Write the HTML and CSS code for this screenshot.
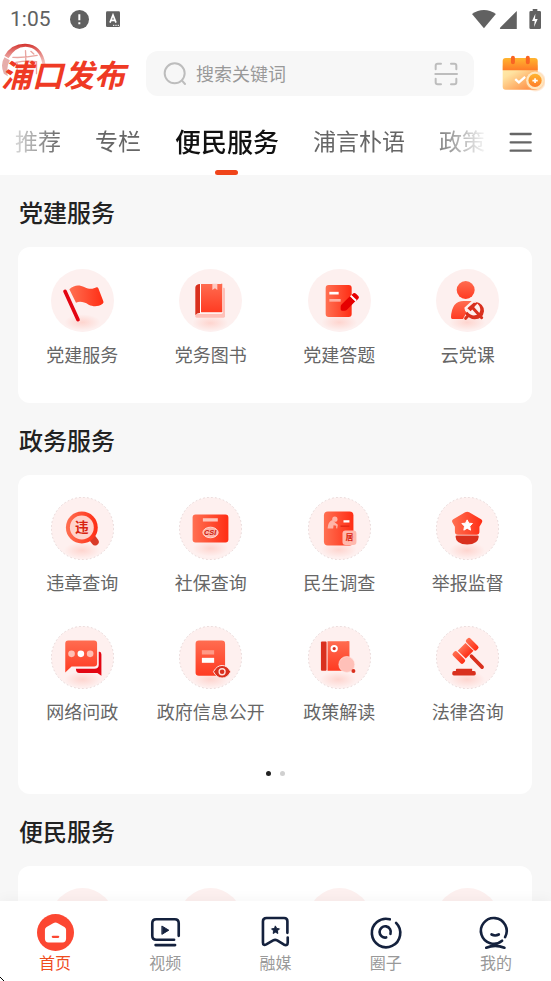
FILE: index.html
```html
<!DOCTYPE html>
<html lang="zh-CN">
<head>
<meta charset="utf-8">
<meta name="viewport" content="width=device-width, initial-scale=1">
<title>浦口发布</title>
<link rel="stylesheet" href="styles.css">
</head>
<body>
<div class="app">
  <div class="status">
    <span class="clock">1:05</span>
    <svg class="status-alert" viewBox="209 27 57 57"><circle cx="237.500" cy="55.500" r="28.500" fill="#616161"/><path d="M237 40v18M237 64v6" stroke="#fff" stroke-width="6"/></svg>
    <svg class="status-lang" viewBox="318 30 42 48"><rect x="318" y="31" width="42" height="47" rx="4" fill="#616161"/><path d="M330 65l9-23 9 23M333 58h12" fill="none" stroke="#fff" stroke-width="5"/><path d="M339 73h4m3 0h4m3 0h4" stroke="#fff" stroke-width="3"/></svg>
    <svg class="status-signals" viewBox="588 24 208 60" fill="#616161"><path d="M588 39Q605 27 624 27Q643 27 660 39L624 82Z"/><path d="M723 30V84H674Q670 84 674 79Z"/><path d="M771 24h14v6h7q4 0 4 4v46q0 4-4 4h-27q-4 0-4-4V34q0-4 4-4h6z"/><path d="M779 38l-10 22h8l-2 18 11-24h-8z" fill="#fff"/></svg>
  </div>

  <header class="header">
    <h1 class="logo">
      <svg class="logo-seal" viewBox="4 126 134 108" fill="none">
        <defs><linearGradient id="seal" x1="0" y1="0" x2="0" y2="1"><stop offset="0" stop-color="#d3302b"/><stop offset="1" stop-color="#e8938d" stop-opacity=".5"/></linearGradient></defs>
        <path d="M12 218Q0 190 14 169L30 178Q18 200 24 226Z" fill="#dc8a86" opacity=".7"/>
        <path d="M14 164Q35 127 77 128Q127 130 137 190H128Q119 139 77 137Q45 138 26 172Z" fill="url(#seal)"/>
        <path d="M39 169Q75 171 112 163M77 149Q80 190 74 222M93 151l9 8M48 184Q80 178 110 182V218M52 184v32M56 200h48" stroke="#e9a5a0" stroke-width="4" stroke-linecap="round"/>
      </svg>
      <span class="logo-text">浦口发布</span>
    </h1>
    <form class="search" role="search">
      <svg class="search-icon" viewBox="488 184 72 72" fill="none" stroke="#bdbdbd" stroke-width="6" stroke-linecap="round"><circle cx="523" cy="218" r="30"/><path d="M545 240l9 10"/></svg>
      <input class="search-input" type="text" placeholder="搜索关键词" aria-label="搜索关键词">
      <button class="plain" type="button" aria-label="扫一扫"><svg class="scan-icon" viewBox="476 186 72 72" fill="none" stroke="#bdbdbd" stroke-width="6" stroke-linecap="round" stroke-linejoin="round"><path d="M481 208v-11q0-6 6-6h10M527 191h10q6 0 6 6v11M543 236v11q0 6-6 6h-10M497 253h-10q-6 0-6-6v-11M480 222h65"/></svg></button>
    </form>
    <button class="plain" type="button" aria-label="签到">
      <svg class="calendar" viewBox="678 168 130 112">
        <defs>
          <linearGradient id="calTop" x1="0" y1="0" x2="0" y2="1"><stop offset="0" stop-color="#ffb52f"/><stop offset="1" stop-color="#ff7c28"/></linearGradient>
          <linearGradient id="calBody" x1="0" y1="0" x2=".8" y2="1"><stop offset="0" stop-color="#ffefb0"/><stop offset=".35" stop-color="#ffe2a0"/><stop offset="1" stop-color="#ff8d42"/></linearGradient>
          <radialGradient id="coinGlow"><stop offset=".6" stop-color="#ffb26b"/><stop offset="1" stop-color="#ffb26b" stop-opacity="0"/></radialGradient>
        </defs>
        <rect x="680" y="194" width="106" height="79" rx="9" fill="url(#calBody)"/>
        <path d="M680 214v-28q0-9 9-9h88q9 0 9 9v28z" fill="url(#calTop)"/>
        <path d="M711 176v14M756 176v14" stroke="#f96423" stroke-width="12" stroke-linecap="round"/>
        <path d="M718 241l11 10 19-17" fill="none" stroke="#fff" stroke-width="7"/>
        <circle cx="779" cy="247" r="33" fill="url(#coinGlow)"/><circle cx="778" cy="245" r="27" fill="#ffe6bd"/><circle cx="778" cy="245" r="20" fill="url(#calTop)"/>
        <path d="M778 238v15M770 245.500h16" stroke="#fff" stroke-width="5"/>
      </svg>
    </button>
  </header>

  <div class="tabbar">
    <nav class="tabs" aria-label="频道">
      <a class="tab" href="#">推荐</a>
      <a class="tab" href="#">专栏</a>
      <a class="tab tab-active" href="#" aria-current="page">便民服务</a>
      <a class="tab" href="#">浦言朴语</a>
      <a class="tab" href="#">政策</a>
    </nav>
    <button class="plain menu" type="button" aria-label="全部频道"><svg class="menu-icon" viewBox="699 67 69 60" stroke="#666" stroke-width="7" stroke-linecap="round"><path d="M704 73h60M704 98h60M704 123h60"/></svg></button>
  </div>

  <main class="content">
    <section>
      <h2 class="title">党建服务</h2>
      <div class="card card-single">
        <div class="grid">
          <a class="item" href="#">
            <svg class="badge" viewBox="94 42 189 189">
              <defs>
                <linearGradient id="red"><stop offset="0" stop-color="#ff7052"/><stop offset="1" stop-color="#ff2d14"/></linearGradient>
                <linearGradient id="redV" x1="0" y1="0" x2="0" y2="1"><stop offset="0" stop-color="#ff6c50"/><stop offset="1" stop-color="#ff3b22"/></linearGradient>
                <radialGradient id="glow"><stop offset="0" stop-color="#ffb9ae" stop-opacity=".5"/><stop offset="1" stop-color="#ffb9ae" stop-opacity="0"/></radialGradient>
              </defs>
              <circle cx="188.500" cy="136.500" r="94.500" fill="#fdf0ef"/><ellipse cx="188" cy="202" rx="54" ry="24" fill="url(#glow)"/>
              <path d="M136 109l39 85" stroke="#e30613" stroke-width="11" stroke-linecap="round"/>
              <path d="M149 103C165 89 178 89 195 97C210 104 221 102 231 97Q234 96 236 100L251 139Q253 143 249 146C234 156 221 155 207 149C193 141 181 138 169 143Z" fill="url(#red)"/>
            </svg>
            <span class="label">党建服务</span>
          </a>
          <a class="item" href="#">
            <svg class="badge" viewBox="480 42 189 189">
              <circle cx="574.500" cy="136.500" r="94.500" fill="#fdf0ef"/><ellipse cx="574" cy="204" rx="54" ry="24" fill="url(#glow)"/>
              <rect x="529" y="98" width="89" height="90" rx="4" fill="#ffc0b8"/><rect x="530" y="88" width="82" height="88" rx="5" fill="#fff"/>
              <path d="M543 87v87q-8-1-14 6V97q1-9 14-10z" fill="#d9301e"/><path d="M546 87h60q4-4 4 2v83h-64z" fill="url(#redV)"/><path d="M580 86h15v19l-7-5-8 5z" fill="#ffc9c1"/>
            </svg>
            <span class="label">党务图书</span>
          </a>
          <a class="item" href="#">
            <svg class="badge" viewBox="97 42 189 189">
              <circle cx="191.500" cy="136.500" r="94.500" fill="#fdf0ef"/><ellipse cx="191" cy="202" rx="54" ry="24" fill="url(#glow)"/>
              <rect x="150" y="90" width="78" height="96" rx="9" fill="url(#red)"/>
              <path d="M161 114.500h28" stroke="#fff" stroke-width="8"/><path d="M161 136h34" stroke="#ffb0a2" stroke-width="8"/>
              <path d="M199 147l24-23 16 15-25 25q-3 3-8 3h-7q-4 0-4-4v-8q0-4 4-8zM227 121l6-6q4-3 8 1l7 7q4 4 0 8l-6 6z" fill="#e60000"/><path d="M223 124l16 15 4-4-16-15z" fill="#fff"/>
            </svg>
            <span class="label">党建答题</span>
          </a>
          <a class="item" href="#">
            <svg class="badge" viewBox="483 42 189 189">
              <circle cx="577.500" cy="136.500" r="94.500" fill="#fdf0ef"/><ellipse cx="577" cy="202" rx="54" ry="24" fill="url(#glow)"/>
              <circle cx="572" cy="105" r="27" fill="url(#redV)"/><path d="M528 187Q530 138 566 138H590L568 158Q569 168 575 172L564 192H532Q528 192 528 187Z" fill="url(#redV)"/>
              <path d="M601 140Q628 146 627 169Q624 193 599 193Q583 192 570 176L577 170Q588 183 600 181Q614 179 616 165Q616 151 601 140Z" fill="#d9301e"/><path d="M579 182l-7 8" stroke="#d9301e" stroke-width="9" stroke-linecap="round"/><path d="M591 156l29 32" stroke="#d9301e" stroke-width="9" stroke-linecap="round"/><path d="M577 160l19-17 13 1-8 8-14 17z" fill="#d9301e"/>
            </svg>
            <span class="label">云党课</span>
          </a>
        </div>
      </div>
    </section>

    <section>
      <h2 class="title">政务服务</h2>
      <div class="card">
        <div class="grid">
          <a class="item" href="#">
            <svg class="badge" viewBox="93 37 190 190">
              <circle class="disc" cx="188" cy="132" r="94"/><ellipse cx="186" cy="198" rx="54" ry="24" fill="url(#glow)"/>
              <path d="M215 158l11 14" stroke="#d93a28" stroke-width="22" stroke-linecap="round"/><circle cx="186" cy="129" r="48" fill="url(#red)"/><circle cx="186" cy="129" r="36" fill="#ffd3cb"/>
              <text class="glyph" x="186" y="144" font-size="41">违</text>
            </svg>
            <span class="label">违章查询</span>
          </a>
          <a class="item" href="#">
            <svg class="badge" viewBox="479 37 190 190">
              <circle class="disc" cx="574" cy="132" r="94"/><ellipse cx="574" cy="192" rx="54" ry="24" fill="url(#glow)"/>
              <rect x="520" y="90" width="108" height="84" rx="9" fill="url(#red)"/><rect x="551" y="101" width="45" height="10" fill="#ffc6bc"/>
              <ellipse cx="574" cy="144" rx="23" ry="16" fill="#ffb3a6" stroke="#ffd6cf" stroke-width="3"/><text class="glyph glyph-latin" x="573" y="152" font-size="22">CSI</text>
            </svg>
            <span class="label">社保查询</span>
          </a>
          <a class="item" href="#">
            <svg class="badge" viewBox="97 37 190 190">
              <circle class="disc" cx="192" cy="132" r="94"/><ellipse cx="190" cy="196" rx="54" ry="24" fill="url(#glow)"/>
              <rect x="145" y="81" width="89" height="102" rx="12" fill="url(#red)"/>
              <circle cx="178" cy="104" r="8" fill="#ffb5a8"/><path d="M156 132Q157 111 170 106L182 117 187 121 185 132 182 131V124L174 122 173 132Z" fill="#ffb5a8"/>
              <path d="M204 110.500h18" stroke="#fff" stroke-width="7"/><path d="M195 125h27" stroke="#e02613" stroke-width="4"/>
              <rect x="201" y="138" width="42" height="44" rx="9" fill="#ffb9ad"/><text class="glyph" x="222" y="168" font-size="24">居</text>
            </svg>
            <span class="label">民生调查</span>
          </a>
          <a class="item" href="#">
            <svg class="badge" viewBox="483 37 190 190">
              <circle class="disc" cx="578" cy="132" r="94"/><ellipse cx="577" cy="198" rx="54" ry="24" fill="url(#glow)"/>
              <path d="M571 83Q577 80 583 83L619 104Q625 108 621 115L614 127V142Q614 151 605 151H549Q540 151 540 142V127L533 115Q529 108 535 104Z" fill="url(#red)"/>
              <path d="M577 106l5 10 11 1-8 8 2 12-10-6-10 6 2-12-8-8 11-1z" fill="#fff" stroke="#fff" stroke-width="3" stroke-linejoin="round"/>
              <path d="M545 153H609Q612 153 612 157Q611 180 577 180Q543 180 542 157Q542 153 545 153Z" fill="#d9301e"/>
            </svg>
            <span class="label">举报监督</span>
          </a>
          <a class="item" href="#">
            <svg class="badge" viewBox="93 33 190 190">
              <circle class="disc" cx="188" cy="128" r="94"/><ellipse cx="188" cy="194" rx="54" ry="24" fill="url(#glow)"/>
              <path d="M237 111Q245 109 245 119V183L233 175H178Q169 175 168 162H224Q237 162 237 150Z" fill="#e30613"/>
              <path d="M145 77H223Q232 77 232 86V146Q232 155 223 155H155L136 173V86Q136 77 145 77Z" fill="url(#redV)"/>
              <circle cx="155" cy="117" r="10" fill="#ffc0b4"/><circle cx="183" cy="117" r="10" fill="#fff"/><circle cx="211" cy="117" r="10" fill="#ffc0b4"/>
            </svg>
            <span class="label">网络问政</span>
          </a>
          <a class="item" href="#">
            <svg class="badge" viewBox="479 33 190 190">
              <circle class="disc" cx="574" cy="128" r="94"/><ellipse cx="574" cy="194" rx="54" ry="24" fill="url(#glow)"/>
              <rect x="529" y="77" width="89" height="106" rx="10" fill="url(#redV)"/><path d="M548 112.500h37" stroke="#ff9a87" stroke-width="13"/><path d="M548 136.500h37" stroke="#fff" stroke-width="15"/>
              <path d="M583 171Q593 152 609 152Q625 152 635 171Q625 190 609 190Q593 190 583 171Z" fill="#d9301e" stroke="#ffe9e6" stroke-width="3"/><circle cx="609" cy="171" r="9" fill="none" stroke="#ffe0db" stroke-width="4"/>
            </svg>
            <span class="label">政府信息公开</span>
          </a>
          <a class="item" href="#">
            <svg class="badge" viewBox="97 33 190 190">
              <circle class="disc" cx="192" cy="128" r="94"/><ellipse cx="188" cy="194" rx="54" ry="24" fill="url(#glow)"/>
              <rect x="136" y="80" width="17" height="88" rx="3" fill="#d9301e"/><path d="M156 79h56q4-2 10 0v89h-66z" fill="url(#redV)"/>
              <circle cx="176" cy="101" r="8" fill="#d9301e" stroke="#fff" stroke-width="6"/>
              <circle cx="214" cy="149" r="24" fill="#ffc0b8" stroke="#ffe6e2" stroke-width="2"/><circle cx="234" cy="169" r="6" fill="#d9301e"/>
            </svg>
            <span class="label">政策解读</span>
          </a>
          <a class="item" href="#">
            <svg class="badge" viewBox="483 33 190 190">
              <circle class="disc" cx="578" cy="128" r="94"/><ellipse cx="577" cy="194" rx="54" ry="24" fill="url(#glow)"/>
              <path d="M590 124l32 33" stroke="#d9301e" stroke-width="11" stroke-linecap="round"/>
              <g transform="rotate(45 572 108)" fill="url(#red)"><rect x="555" y="91" width="34" height="33"/><rect x="550" y="71" width="44" height="17" rx="6"/><rect x="550" y="128" width="44" height="17" rx="6"/></g>
              <path d="M546 162h46v7h6q5 0 5 6v3q0 4-5 4h-61q-5 0-5-4v-3q0-6 5-6h6v-4q0-3 3-3z" fill="#d9301e"/>
            </svg>
            <span class="label">法律咨询</span>
          </a>
        </div>
        <div class="pager"><span class="dot dot-on"></span><span class="dot"></span></div>
      </div>
    </section>

    <section>
      <h2 class="title">便民服务</h2>
      <div class="card">
        <div class="grid">
          <span class="item"><span class="blank"></span></span>
          <span class="item"><span class="blank"></span></span>
          <span class="item"><span class="blank"></span></span>
          <span class="item"><span class="blank"></span></span>
        </div>
      </div>
    </section>
  </main>

  <nav class="bottom" aria-label="主导航">
    <a class="nav nav-on" href="#">
      <svg class="nav-icon" viewBox="108 162 112 112"><circle cx="164" cy="218" r="56" fill="#fc4732"/><path d="M157 190Q164 186 171 190L191 201Q196 204 196 210V237Q196 248 185 248H143Q132 248 132 237V210Q132 204 137 201Z" fill="#fff"/><path d="M156 231h16" stroke="#fc4732" stroke-width="7" stroke-linecap="round"/></svg>
      <span>首页</span>
    </a>
    <a class="nav" href="#">
      <svg class="nav-icon line" viewBox="439 162 112 112"><path d="M535 228V190Q535 178 523 178H467Q455 178 455 190V228Q455 240 467 240H521M465 256h59"/><path class="solid" d="M485 199L505 211 485 223Z"/></svg>
      <span>视频</span>
    </a>
    <a class="nav" href="#">
      <svg class="nav-icon line" viewBox="770 162 112 112"><path d="M862 219V184Q862 174 852 174H799Q788 174 788 184V248Q788 259 798 254L819 242Q825 239 831 242L852 255Q863 259 863 248V233"/><path class="solid" d="M826 199l4 7 8 1-6 6 1 8-7-4-7 4 1-8-6-6 8-1z"/></svg>
      <span>融媒</span>
    </a>
    <a class="nav" href="#">
      <svg class="nav-icon line" viewBox="272 462 112 112"><path d="M341 478A43 43 0 1 0 360 489M343 522A17 17 0 1 0 330 533"/></svg>
      <span>圈子</span>
    </a>
    <a class="nav" href="#">
      <svg class="nav-icon line" viewBox="603 462 112 112"><path d="M679 543A39 39 0 1 1 688 532M647 524Q658 530 669 524M631 564Q658 553 686 564"/></svg>
      <span>我的</span>
    </a>
    <svg class="corner" viewBox="0 0 4 4" aria-hidden="true"><path d="M0 0h1v1H0zM1 1h1v1H1zM2 2h1v1H2zM3 3h1v1H3z"/></svg>
  </nav>
</div>
</body>
</html>
```
FILE: styles.css
```css
* { box-sizing: border-box; }
body { margin: 0; background: #fff; color: #666; font-family: "Noto Sans CJK SC", sans-serif; }
a { color: inherit; text-decoration: none; }
svg { display: block; flex: none; }
h1, h2 { margin: 0; }

.app { display: flex; flex-direction: column; height: 100vh; overflow: hidden; }
.plain { padding: 0; border: 0; background: none; }

.status { display: flex; align-items: center; height: 38px; padding: 0 10px; }
.clock { font: 21px/20px Roboto, sans-serif; color: #616161; margin-right: 19px; }
.status-alert { width: 19px; height: 19px; margin-right: 17px; }
.status-lang { width: 14px; height: 16px; }
.status-signals { width: 69px; height: 20px; margin-left: auto; }

.header { display: flex; align-items: center; height: 71px; padding: 0 6px 0 1px; }
.logo { position: relative; width: 129px; height: 62px; margin-right: 16px; font-size: 31px; line-height: 40px; padding-top: 11px; white-space: nowrap; }
.logo-seal { position: absolute; left: 0; top: 0; width: 45px; height: 36px; }
.logo-text { position: relative; color: #ef3a24; font-style: italic; font-weight: 700; }
.search { display: flex; align-items: center; flex: 1; min-width: 0; height: 45px; margin-right: 28px; padding: 0 16px 0 17px; border-radius: 12px; background: #f7f7f7; }
.search-icon, .scan-icon { width: 24px; height: 24px; }
.search-input { flex: 1; min-width: 0; padding: 0 0 2px; margin: 0 9px; border: 0; outline: 0; background: none; font: 18px/28px "Noto Sans CJK SC", sans-serif; }
.search-input::placeholder { color: #999; opacity: 1; }
.calendar { width: 43px; height: 37px; }

.tabbar { display: flex; align-items: stretch; height: 66px; padding-right: 19px; }
.tabs { display: flex; align-items: flex-start; flex: 1; min-width: 0; gap: 34px; padding-left: 15px; overflow: hidden; font-size: 23px; white-space: nowrap; -webkit-mask-image: linear-gradient(to right, transparent, #000 60px, #000 calc(100% - 60px), transparent); mask-image: linear-gradient(to right, transparent, #000 60px, #000 calc(100% - 60px), transparent); }
.tab { position: relative; flex: none; height: 66px; line-height: 63px; }
.tab-active { color: #111; font-size: 26px; font-weight: 500; }
.tab-active::after { content: ""; position: absolute; left: calc(50% - 12px); bottom: 0; width: 23px; height: 5px; border-radius: 3px; background: #f0441a; }
.menu { margin-left: 20px; }
.menu-icon { width: 23px; height: 20px; }

.content { flex: 1; min-height: 0; overflow: hidden; padding: 0 19px 0 18px; background: #f7f7f7; }
.title { padding: 21px 0 19px 1px; color: #222; font-size: 24px; font-weight: 500; line-height: 32px; }
.card { padding: 22px 0 18px; border-radius: 12px; background: #fff; }
.card-single { padding-bottom: 37px; }
.grid { display: grid; grid-template-columns: repeat(4, 1fr); row-gap: 32px; }
.item { display: flex; flex-direction: column; align-items: center; gap: 10px; }
.badge { width: 63px; height: 63px; }
.label { font-size: 18px; line-height: 24px; white-space: nowrap; }
.disc { fill: #fef0ef; stroke: #dcc9c8; stroke-width: 2; stroke-dasharray: 5 7; }
.glyph { fill: #d9230f; font-family: "Noto Sans CJK SC", sans-serif; font-weight: 700; text-anchor: middle; }
.glyph-latin { fill: #c9170c; font-family: "Liberation Sans", sans-serif; font-style: italic; }
.blank { width: 63px; height: 63px; border-radius: 50%; background: #fdf0ef; }
.pager { display: flex; justify-content: center; gap: 9px; padding-top: 48px; }
.dot { width: 5px; height: 5px; border-radius: 50%; background: #d0d0d0; }
.dot-on { background: #222; }

.bottom { position: relative; display: flex; flex: none; padding: 13px 0 9px; background: #fff; box-shadow: 0 -2px 12px rgba(0, 0, 0, .04); }
.nav { display: flex; flex: 1; flex-direction: column; align-items: center; gap: 1px; color: #999; font-size: 16px; line-height: 20px; }
.nav-on { color: #ef4c1e; }
.nav-icon { width: 37px; height: 37px; }
.line { fill: none; stroke: #14213d; stroke-width: 8; stroke-linecap: round; stroke-linejoin: round; }
.solid { fill: #14213d; stroke-width: 3; }
.corner { position: absolute; left: 0; bottom: 0; width: 4px; height: 4px; }
```
